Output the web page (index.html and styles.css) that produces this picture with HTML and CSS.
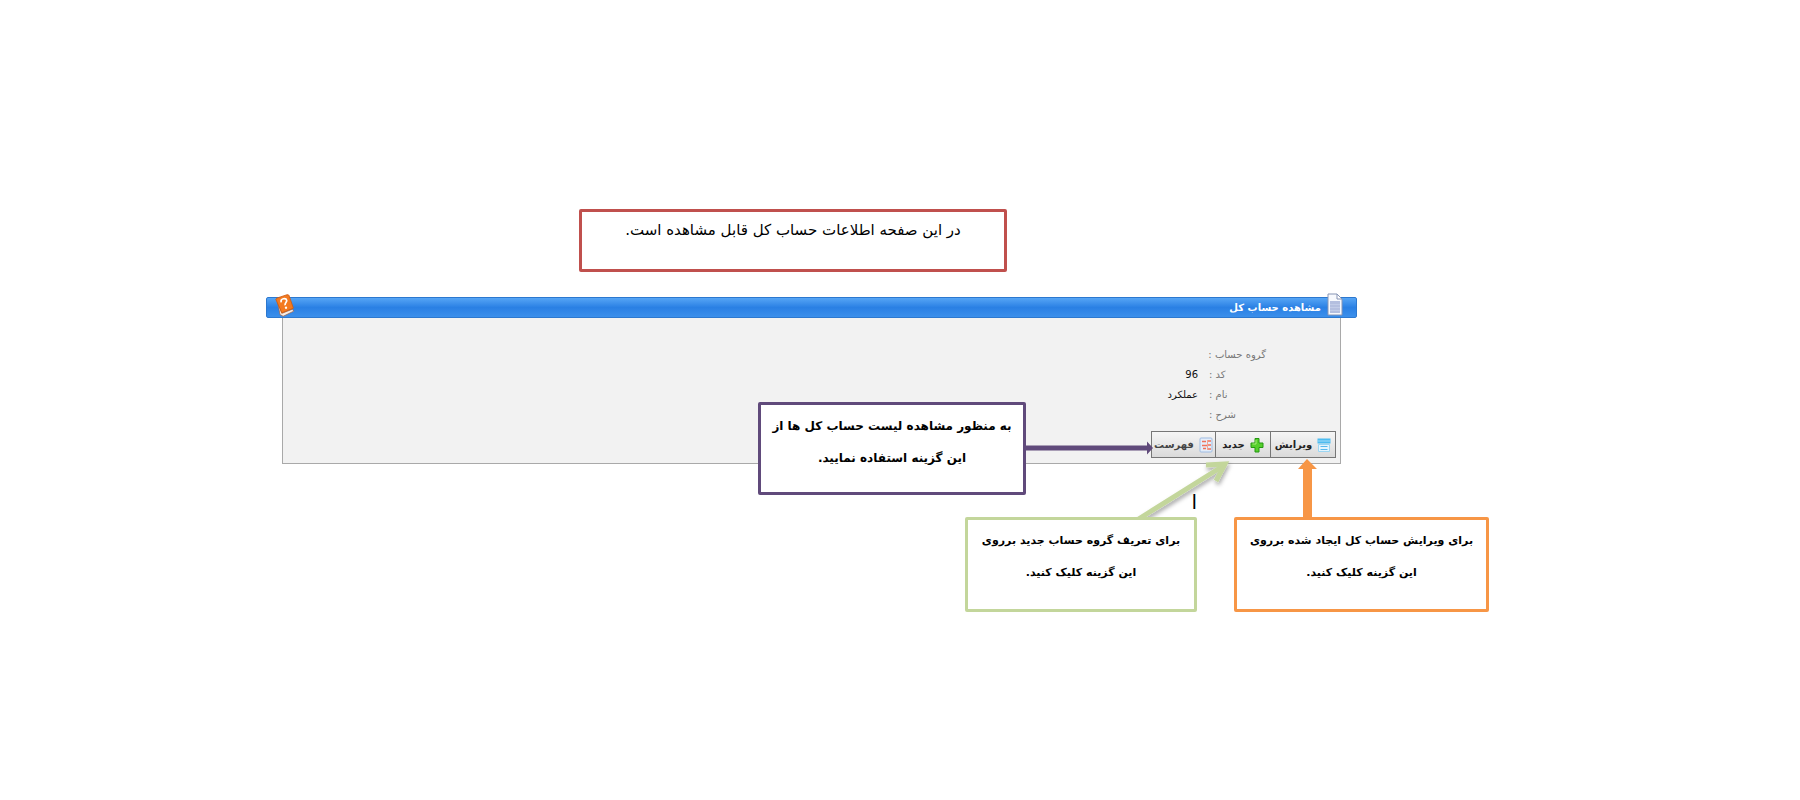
FILE: index.html
```html
<!DOCTYPE html>
<html lang="fa" dir="rtl">
<head>
<meta charset="utf-8">
<title>مشاهده حساب کل</title>
<link rel="stylesheet" href="styles.css">
</head>
<body>
<main class="guide">
  <p class="note note-intro">در این صفحه اطلاعات حساب کل قابل مشاهده است.</p>

  <section class="window">
    <header class="titlebar">
      <svg class="doc-icon" width="16" height="24" viewBox="0 0 16 24" aria-hidden="true">
        <path d="M1 1h9l5 5v16H1z" fill="#f7f9fd" stroke="#8795b5"/>
        <path d="M10 1v5h5z" fill="#fff" stroke="#8795b5"/>
        <path d="M3 8h10v12H3z" fill="#b4bfdf"/>
        <path d="M3 11.500h10M3 14.500h10M3 17.500h10" stroke="#c2cce7"/>
      </svg>
      <h1 class="title">مشاهده حساب کل</h1>
      <a class="help" href="#" aria-label="راهنما">
        <svg class="help-icon" width="20" height="23" viewBox="0 0 20 23" aria-hidden="true">
          <g transform="rotate(-6 10 11)">
            <path d="M3 6L6 19l11-3 1 2-11 4-3-2z" fill="#f4eee8" stroke="#a9552a" stroke-width=".6"/>
            <path d="M1.500 4.500Q2 3 4 3L13 1q2 0 2 1l3 13-12 3.500z" fill="#f37a20" stroke="#cf5b10" stroke-width=".8"/>
            <path d="M6.500 8Q6 5 9 4.600q3-.2 3.200 2c.1 1.900-2.400 2.100-2.100 4.600" fill="none" stroke="#fff" stroke-width="1.700"/>
            <circle cx="10.700" cy="13.800" r="1.200" fill="#fff"/>
          </g>
        </svg>
      </a>
    </header>
    <div class="panel">
      <dl class="fields">
        <dt>گروه حساب :</dt><dd></dd>
        <dt>کد :</dt><dd>96</dd>
        <dt>نام :</dt><dd>عملکرد</dd>
        <dt>شرح :</dt><dd></dd>
      </dl>
      <div class="toolbar">
        <button class="tool tool-edit" type="button">
          <svg width="14" height="16" viewBox="0 0 14 16" aria-hidden="true">
            <path d="M.5 1.500h13v5H.5z" fill="#4dbcf0"/><path d="M.5 4h13" stroke="#a5dcf8"/>
            <path d="M1.500 7.500h11v7h-11z" fill="#e4f5fe" stroke="#9cd6f3"/><path d="M3.500 9.500h7M3.500 12.500h7" stroke="#58b8ec"/>
          </svg>
          <span>ویرایش</span>
        </button>
        <button class="tool tool-new" type="button">
          <svg width="14" height="16" viewBox="0 0 14 16" aria-hidden="true">
            <path d="M5 1.500h4v4.500h4v4.500H9v4.500H5v-4.500H1V6h4z" fill="#55cf2c" stroke="#259712" stroke-linejoin="round"/>
            <path d="M6 3v4H2.500" fill="none" stroke="#a5ed76"/>
          </svg>
          <span>جدید</span>
        </button>
        <button class="tool tool-list" type="button">
          <svg width="14" height="16" viewBox="0 0 14 16" aria-hidden="true">
            <rect x="1" y="1" width="12" height="14" rx="1" fill="#e4edf9" stroke="#9fbce3"/>
            <path d="M3 4.500h4M8 4h4M3 8.500h5M9 8h3M4 11.500h3M9 12h3" stroke="#f0715a" stroke-width="1.500"/>
            <path d="M8.500 3v10" stroke="#f3a493"/>
          </svg>
          <span>فهرست</span>
        </button>
      </div>
    </div>
  </section>

  <svg class="arrows" width="470" height="90" viewBox="0 0 470 90" aria-hidden="true">
    <defs>
      <filter id="shade" x="-20%" y="-20%" width="150%" height="150%">
        <feDropShadow dx="1" dy="3" stdDeviation="2" flood-color="#000" flood-opacity=".35"/>
      </filter>
    </defs>
    <path d="M6 14.500h121v-4l6 6.500-6 6.500v-4H6z" fill="#604a7b"/>
    <g fill="none" stroke="#c3d69b" stroke-width="5" filter="url(#shade)">
      <path d="M117 89L203 35" stroke-linecap="round"/>
      <path d="M186 34L205 33 196 50"/>
    </g>
    <path d="M287 28L297 38h-5v52h-9V38h-5z" fill="#f79646"/>
  </svg>

  <p class="note note-list">به منظور مشاهده لیست حساب کل ها از<br>این گزینه استفاده نمایید.</p>
  <p class="note note-new">برای تعریف گروه حساب جدید برروی<br>این گزینه کلیک کنید.</p>
  <p class="note note-edit">برای ویرایش حساب کل ایجاد شده برروی<br>این گزینه کلیک کنید.</p>
  <span class="stray">ا</span>
</main>
</body>
</html>
```
FILE: styles.css
```css
* { box-sizing: border-box; }

body {
  margin: 0;
  min-height: 100vh;
  padding: 209px 311px 0 266px;
  background: #fff;
  color: #000;
  font-family: "DejaVu Sans", sans-serif;
}

.guide {
  position: relative;
  min-height: 404px;
}

.note {
  margin: 0;
  border: 3px solid;
  border-radius: 2px;
  background: #fff;
  text-align: center;
  white-space: nowrap;
}

.note-intro {
  width: 428px;
  margin-right: 482px;
  padding: 4px 0 24px;
  border-color: #c0504d;
  font-size: 15px;
  line-height: 29px;
}

/* Application window */
.window {
  margin: 25px 132px 0 0;
}

.titlebar {
  display: flex;
  align-items: center;
  gap: 6px;
  height: 21px;
  padding: 0 13px 0 8px;
  border: 1px solid #2c78cf;
  border-radius: 2px;
  background: linear-gradient(#56a5f5, #2a80e4 50%, #3b8feb);
}

.doc-icon { margin-top: -6px; }

.title {
  flex: 1;
  margin: 0;
  color: #fff;
  font-size: 10px;
  font-weight: bold;
  line-height: 16px;
}

.help { display: flex; margin-top: -4px; }

.panel {
  margin: 0 16px 0 16px;
  padding: 27px 4px 5px;
  border: 1px solid #a9a9a9;
  border-top: 0;
  background: #f2f2f2;
}

.fields {
  display: grid;
  grid-template-columns: 57px auto;
  grid-auto-rows: 20px;
  column-gap: 11px;
  margin: 0 70px 6px 0;
  font-size: 10px;
  line-height: 20px;
  white-space: nowrap;
}

.fields dt { color: #777; text-align: left; }
.fields dd { margin: 0; color: #111; }

.toolbar { display: flex; }

.tool {
  display: flex;
  align-items: center;
  justify-content: center;
  gap: 5px;
  height: 27px;
  padding: 0;
  border: 1px solid #777;
  background: linear-gradient(#f6f6f6, #dadada);
  color: #222;
  font-family: inherit;
  font-size: 10px;
  font-weight: bold;
}

.tool + .tool { border-right: 0; }
.tool-edit { width: 66px; }
.tool-new { width: 55px; }
.tool-list { width: 64px; color: #444; }

/* Annotations over the window */
.note-list,
.note-new,
.note-edit {
  position: absolute;
  padding: 5px 0 20px;
  font-size: 11px;
  font-weight: bold;
  line-height: 32px;
}

.note-list {
  top: 193px;
  right: 463px;
  width: 268px;
  padding-bottom: 18px;
  border-color: #604a7b;
  font-size: 12px;
}

.note-new {
  top: 308px;
  right: 292px;
  width: 232px;
  border-color: #c3d69b;
}

.note-edit {
  top: 308px;
  right: 0;
  width: 255px;
  border-color: #f79646;
}

.arrows {
  position: absolute;
  top: 222px;
  right: -1px;
}

.stray {
  position: absolute;
  top: 281px;
  right: 292px;
  font-size: 20px;
  line-height: 24px;
}
```
